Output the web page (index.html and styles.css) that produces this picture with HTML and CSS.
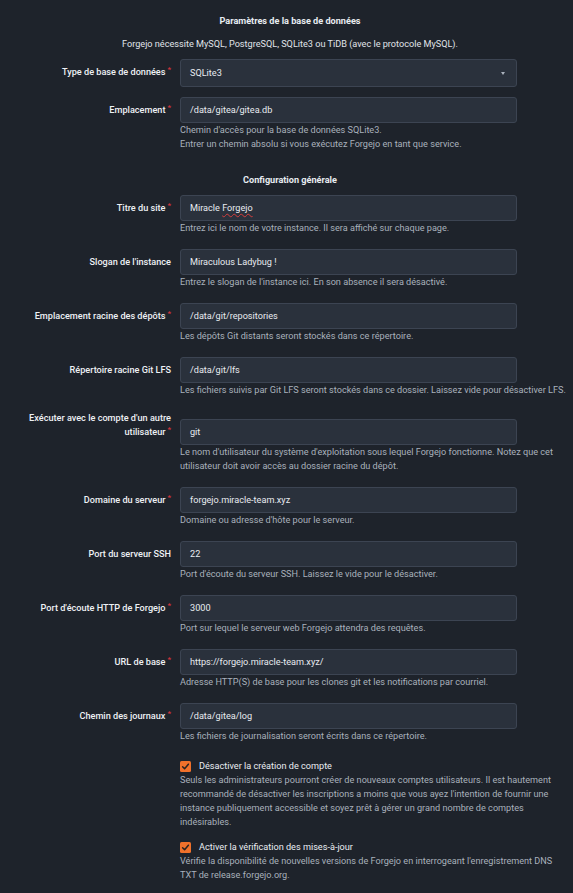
FILE: index.html
```html
<!DOCTYPE html>
<html lang="fr">
<head>
<meta charset="utf-8">
<title>Installation</title>
<link rel="stylesheet" href="styles.css">
</head>
<body>
<main class="form">
  <h4 class="section-title first">Paramètres de la base de données</h4>
  <p class="section-desc">Forgejo nécessite MySQL, PostgreSQL, SQLite3 ou TiDB (avec le protocole MySQL).</p>

  <div class="field select-field">
    <label class="field-label required">Type de base de données</label>
    <div class="select">SQLite3<span class="caret"></span></div>
  </div>

  <div class="field">
    <label class="field-label required">Emplacement</label>
    <div class="input">/data/gitea/gitea.db</div>
    <div class="help">Chemin d'accès pour la base de données SQLite3.<br>Entrer un chemin absolu si vous exécutez Forgejo en tant que service.</div>
  </div>

  <h4 class="section-title">Configuration générale</h4>

  <div class="field">
    <label class="field-label required">Titre du site</label>
    <div class="input">Miracle <span class="misspelled">Forgejo</span></div>
    <div class="help">Entrez ici le nom de votre instance. Il sera affiché sur chaque page.</div>
  </div>

  <div class="field">
    <label class="field-label">Slogan de l'instance</label>
    <div class="input">Miraculous Ladybug !</div>
    <div class="help">Entrez le slogan de l'instance ici. En son absence il sera désactivé.</div>
  </div>

  <div class="field">
    <label class="field-label required">Emplacement racine des dépôts</label>
    <div class="input">/data/git/repositories</div>
    <div class="help">Les dépôts Git distants seront stockés dans ce répertoire.</div>
  </div>

  <div class="field">
    <label class="field-label">Répertoire racine Git LFS</label>
    <div class="input">/data/git/lfs</div>
    <div class="help">Les fichiers suivis par Git LFS seront stockés dans ce dossier. Laissez vide pour désactiver LFS.</div>
  </div>

  <div class="field">
    <label class="field-label required">Exécuter avec le compte d'un autre utilisateur</label>
    <div class="input">git</div>
    <div class="help">Le nom d'utilisateur du système d'exploitation sous lequel Forgejo fonctionne. Notez que cet utilisateur doit avoir accès au dossier racine du dépôt.</div>
  </div>

  <div class="field">
    <label class="field-label required">Domaine du serveur</label>
    <div class="input">forgejo.miracle-team.xyz</div>
    <div class="help">Domaine ou adresse d'hôte pour le serveur.</div>
  </div>

  <div class="field">
    <label class="field-label">Port du serveur SSH</label>
    <div class="input">22</div>
    <div class="help">Port d'écoute du serveur SSH. Laissez le vide pour le désactiver.</div>
  </div>

  <div class="field">
    <label class="field-label required">Port d'écoute HTTP de Forgejo</label>
    <div class="input">3000</div>
    <div class="help">Port sur lequel le serveur web Forgejo attendra des requêtes.</div>
  </div>

  <div class="field">
    <label class="field-label required">URL de base</label>
    <div class="input">https://forgejo.miracle-team.xyz/</div>
    <div class="help">Adresse HTTP(S) de base pour les clones git et les notifications par courriel.</div>
  </div>

  <div class="field">
    <label class="field-label required">Chemin des journaux</label>
    <div class="input">/data/gitea/log</div>
    <div class="help">Les fichiers de journalisation seront écrits dans ce répertoire.</div>
  </div>

  <div class="field check-field first-check">
    <div class="checkbox">
      <svg class="box" width="11" height="11" viewBox="0 0 11 11" aria-hidden="true"><rect width="11" height="11" rx="1.5" fill="#f0712b"/><path d="M2.6 5.8 L4.6 7.8 L8.4 3.2" fill="none" stroke="#2a2320" stroke-width="1.5" stroke-linecap="round" stroke-linejoin="round"/></svg>
      <span>Désactiver la création de compte</span>
    </div>
    <div class="help">Seuls les administrateurs pourront créer de nouveaux comptes utilisateurs. Il est hautement recommandé de désactiver les inscriptions a moins que vous ayez l'intention de fournir une instance publiquement accessible et soyez prêt à gérer un grand nombre de comptes indésirables.</div>
  </div>

  <div class="field check-field">
    <div class="checkbox">
      <svg class="box" width="11" height="11" viewBox="0 0 11 11" aria-hidden="true"><rect width="11" height="11" rx="1.5" fill="#f0712b"/><path d="M2.6 5.8 L4.6 7.8 L8.4 3.2" fill="none" stroke="#2a2320" stroke-width="1.5" stroke-linecap="round" stroke-linejoin="round"/></svg>
      <span>Activer la vérification des mises-à-jour</span>
    </div>
    <div class="help">Vérifie la disponibilité de nouvelles versions de Forgejo en interrogeant l'enregistrement DNS TXT de release.forgejo.org.</div>
  </div>
</main>
</body>
</html>
```

FILE: styles.css
```css
html, body {
  margin: 0;
  padding: 0;
  background: #1e232b;
}

body {
  font-family: Roboto, "Liberation Sans", sans-serif;
  font-size: 9.15px;
  line-height: 14px;
  color: #e2e6ec;
}

.form {
  width: 564px;
  margin-left: 8px;
  padding-top: 14px;
  padding-bottom: 20px;
}

.section-title {
  margin: 22px 0 8px;
  text-align: center;
  font-size: 9.15px;
  font-weight: 700;
  line-height: 14px;
  color: #e8ecf1;
}

.section-title.first {
  margin-top: 0;
}

.section-desc {
  margin: 9px 0 8px;
  text-align: center;
  color: #e0e4ea;
}

.field {
  display: grid;
  grid-template-columns: 163px 337px 1fr;
  column-gap: 9px;
  margin-bottom: 14px;
}

.select-field {
  margin-bottom: 10px;
}

.field-label {
  grid-column: 1;
  align-self: last baseline;
  text-align: right;
  font-weight: 500;
  color: #eef1f5;
}

.field-label.required::after {
  content: "*";
  color: #d6333b;
  font-size: 8px;
  margin-left: 2px;
  vertical-align: 3px;
  line-height: 0;
}

.input,
.select {
  grid-column: 2;
  align-self: last baseline;
  box-sizing: border-box;
  background: #2a313c;
  border: 1px solid #3c4452;
  border-radius: 3px;
  padding: 5px 10px 5px 9px;
  color: #e8ebf0;
  white-space: nowrap;
}

.select {
  display: flex;
  align-items: center;
  padding-top: 6px;
  padding-bottom: 6px;
}

.caret {
  margin-left: auto;
  margin-right: 1px;
  width: 0;
  height: 0;
  border-left: 2.5px solid transparent;
  border-right: 2.5px solid transparent;
  border-top: 3px solid #aab2bd;
}

.misspelled {
  text-decoration: underline wavy #d43d3d;
  text-decoration-thickness: 1px;
  text-underline-offset: 2px;
}

.help {
  grid-column: 2 / 4;
  width: 390px;
  color: #a9b1bc;
}

.check-field {
  margin-bottom: 11px;
}

.first-check {
  margin-top: 16px;
}

.checkbox {
  grid-column: 2 / 4;
  display: flex;
  align-items: center;
  gap: 8px;
  color: #eaedf2;
}

.box {
  display: block;
  flex: none;
}
```
